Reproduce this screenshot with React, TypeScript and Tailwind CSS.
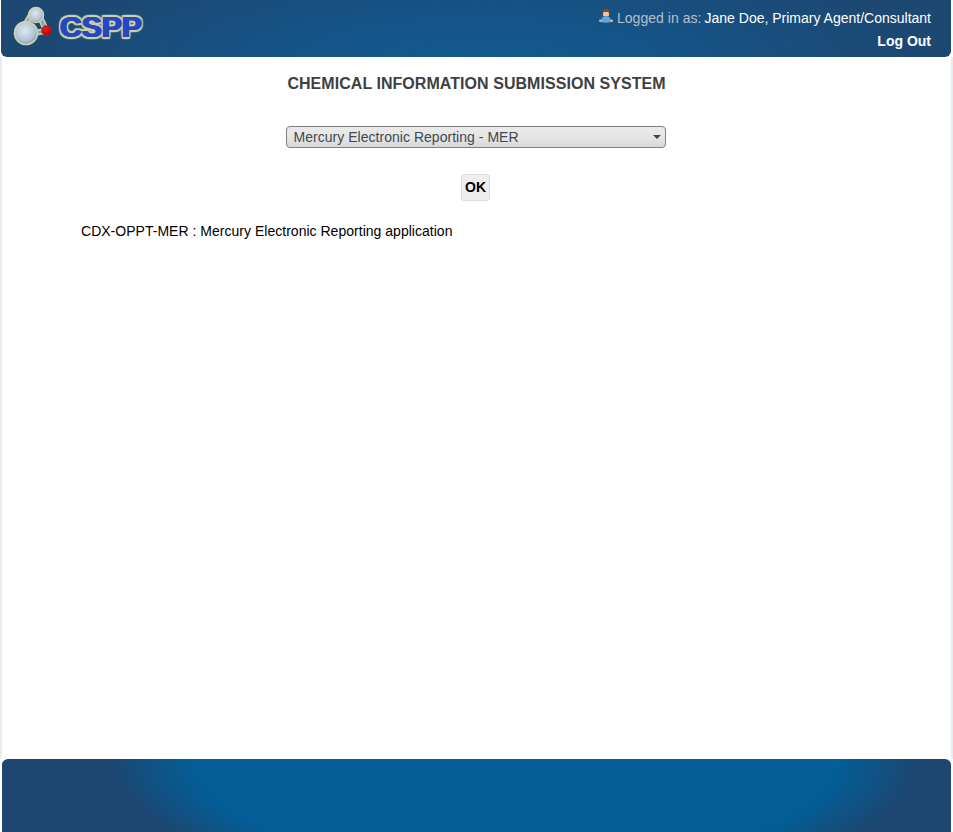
export default function App() {
  return (
    <div className="h-[832px] w-[953px] overflow-hidden bg-white font-['Liberation_Sans',Arial,sans-serif] flex flex-col">
      <header className="h-[57px] mx-px mr-[2px] rounded-b-[6px] flex justify-between pl-[11px] pr-[20px] text-white bg-[radial-gradient(ellipse_450px_100px_at_50%_100%,#115a8e_0%,#15558a_35%,#1c4872_100%)]">
        <div className="flex items-start">
          <svg width="50" height="50" viewBox="0 0 50 50" className="mt-[3px] shrink-0">
            <defs>
              <radialGradient id="ball" cx="45%" cy="40%" r="65%">
                <stop offset="0%" stopColor="#dfe7f0" />
                <stop offset="65%" stopColor="#b4c4d8" />
                <stop offset="100%" stopColor="#7f90ab" />
              </radialGradient>
              <radialGradient id="red" cx="40%" cy="35%" r="70%">
                <stop offset="0%" stopColor="#f02020" />
                <stop offset="100%" stopColor="#b00000" />
              </radialGradient>
            </defs>
            <path d="M19 12 L10 27 M28 14 L34 27 M15 31 L34 28" stroke="#cdd5ad" strokeWidth="6" fill="none" />
            <path d="M19 12 L10 27 M28 14 L34 27 M15 31 L34 28" stroke="#8fa3bd" strokeWidth="3" fill="none" />
            <circle cx="24" cy="12" r="7.5" fill="url(#ball)" stroke="#cdd5ad" strokeWidth="1.5" />
            <circle cx="14" cy="30" r="11.5" fill="url(#ball)" stroke="#cdd5ad" strokeWidth="1.6" />
            <circle cx="34.5" cy="27.5" r="5" fill="url(#red)" stroke="#8a3a3a" strokeWidth="0.5" />
          </svg>
          <span className="mt-[11px] ml-[-2px] text-[30px] leading-[32px] font-bold text-[#2547c4] [text-shadow:1px_0_0_#2547c4,-1px_0_0_#2547c4,2px_0_1px_#cbd3a6,-2px_0_1px_#cbd3a6,0_2px_1px_#cbd3a6,0_-2px_1px_#cbd3a6,2px_2px_1px_#cbd3a6,-2px_-2px_1px_#cbd3a6,2px_-2px_1px_#cbd3a6,-2px_2px_1px_#cbd3a6]">CSPP</span>
        </div>
        <div className="pt-[9px] text-right text-[14px] leading-[21px]">
          <div className="flex items-center justify-end h-[19px]">
            <svg width="16" height="16" viewBox="0 0 16 16" className="mr-[3px] -mt-[6px]">
              <path d="M4 6 Q3.5 1 8 1 Q12.5 1 12 6 L11 5 L5 5 Z" fill="#8a4b22" />
              <rect x="5" y="4" width="6" height="4.5" rx="1.5" fill="#f0c4a0" />
              <path d="M4 9.5 Q8 7.5 12 9.5 L13 14 Q8 15.5 3 14 Z" fill="#58a6ee" />
              <rect x="1" y="11.5" width="3" height="2.5" rx="1" fill="#e8a878" />
              <rect x="12" y="11.5" width="3" height="2.5" rx="1" fill="#e8a878" />
            </svg>
            <span className="text-[#b5c0cc] tracking-[0.04px]">Logged in as:</span>
            <span className="ml-[3px]">Jane Doe, Primary Agent/Consultant</span>
          </div>
          <div className="font-bold mt-[3px]">Log Out</div>
        </div>
      </header>
      <main className="flex-1 pr-[2px] border-r-2 border-l-2 border-[#e8ecf0] flex flex-col items-center">
        <h1 className="mt-[17px] h-[20px] ml-[2px] text-[16px] leading-[20px] font-bold text-[#404040] tracking-[0.05px]">CHEMICAL INFORMATION SUBMISSION SYSTEM</h1>
        <div className="mt-[32px] w-[380px] h-[22px] rounded-[4px] border border-[#808080] bg-[linear-gradient(#e9e9e9,#e6e6e6_50%,#d8d8d8)] flex items-center justify-between pl-[7px] pr-[3px] text-[14px] text-[#404850]">
          <span className="tracking-[0.03px]">Mercury Electronic Reporting - MER</span>
          <span className="w-0 h-0 border-x-[4px] border-x-transparent border-t-[4px] border-t-[#444] mr-[1px]" />
        </div>
        <button className="mt-[26px] w-[29px] h-[27px] rounded-[3px] border border-[#ddd] bg-[#eee] text-[14px] font-bold text-black">OK</button>
        <p className="self-start ml-[79px] mt-[20px] text-[14px] leading-[20px] text-black tracking-[0.02px]">CDX-OPPT-MER : Mercury Electronic Reporting application</p>
      </main>
      <footer className="h-[73px] ml-[2px] mr-[2px] rounded-t-[6px] bg-[radial-gradient(ellipse_406px_140px_at_513px_0,#045d96_0%,#045d96_80%,#1d4670_100%)]" />
    </div>
  );
}
